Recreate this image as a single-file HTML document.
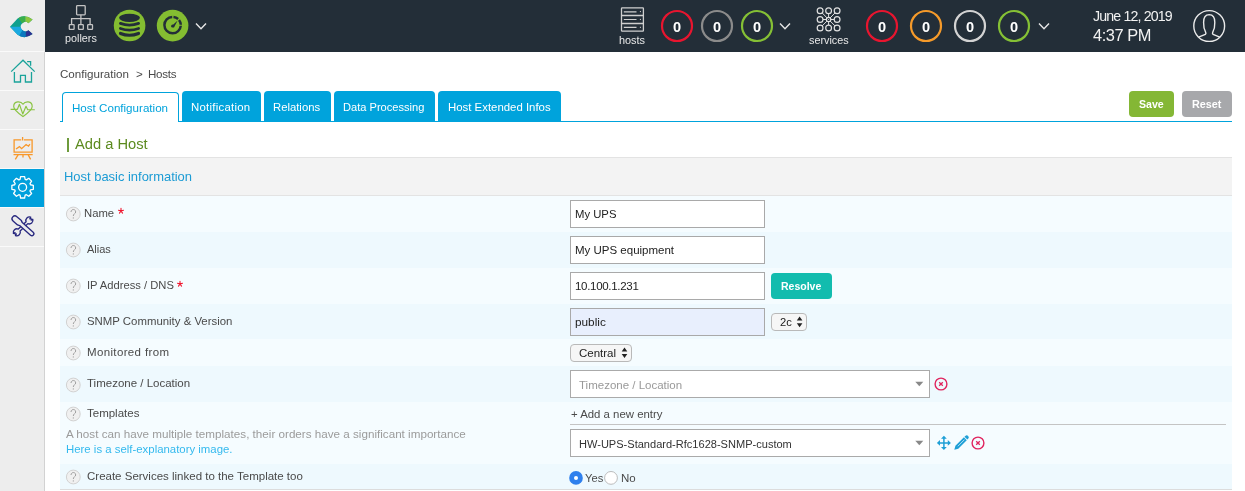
<!DOCTYPE html>
<html><head><meta charset="utf-8"><title>Centreon - Add a Host</title>
<style>
html,body{margin:0;padding:0;width:1245px;height:491px;overflow:hidden;background:#fff}
body{position:relative;font-family:"Liberation Sans", sans-serif}
span{font-family:"Liberation Sans", sans-serif;will-change:transform}
</style></head><body>
<div style="position:absolute;left:0px;top:0px;width:1245px;height:491px;background:#fff"></div>
<div style="position:absolute;left:0px;top:0px;width:45px;height:52px;background:#ededed"></div>
<div style="position:absolute;left:0px;top:52px;width:44px;height:439px;background:#ededed"></div>
<div style="position:absolute;left:44px;top:52px;width:1px;height:439px;background:#d2d2d2"></div>
<div style="position:absolute;left:45px;top:0px;width:1200px;height:52px;background:#232e38"></div>
<div style="position:absolute;left:0px;top:51px;width:44px;height:1px;background:#fafafa"></div>
<div style="position:absolute;left:0px;top:90px;width:44px;height:1px;background:#fafafa"></div>
<div style="position:absolute;left:0px;top:129px;width:44px;height:1px;background:#fafafa"></div>
<div style="position:absolute;left:0px;top:168px;width:44px;height:1px;background:#fafafa"></div>
<div style="position:absolute;left:0px;top:207px;width:44px;height:1px;background:#fafafa"></div>
<div style="position:absolute;left:0px;top:246px;width:44px;height:1px;background:#fafafa"></div>
<div style="position:absolute;left:0px;top:169px;width:44px;height:38px;background:#00a0dc"></div>
<svg style="position:absolute;left:0;top:0" width="44" height="52" viewBox="0 0 44 52">
<defs><clipPath id="lc"><path d="M10 26.7 L17.6 18.6 Q24.5 13.5 32.6 19.4 L28.4 23.2 A4.6 4.6 0 1 0 28.4 30.2 L32.6 34.0 Q24.5 39.9 17.6 34.8 Z"/></clipPath></defs>
<g clip-path="url(#lc)">
<rect x="0" y="0" width="44" height="52" fill="#0fa08e"/>
<polygon points="24.5,26.7 14,12 25.3,12 25.3,26.7" fill="#3aae4a"/>
<polygon points="25.3,26.7 25.3,10 40,10 40,26.7" fill="#8dc63f"/>
<polygon points="24.5,26.7 0,26.7 0,45 14,45" fill="#1ba9e1"/>
<polygon points="24.5,26.7 14,45 25.8,45 25.8,26.7" fill="#0b78c0"/>
<polygon points="25.8,26.7 25.8,45 40,45 40,26.7" fill="#2e3192"/>
</g></svg>
<svg style="position:absolute;left:60px;top:0" width="44" height="52" viewBox="60 0 44 52" fill="none" stroke="#c4c4c4" stroke-width="1.3">
<rect x="76.6" y="5.6" width="8.6" height="9.2" rx="0.8"/>
<path d="M80.9 14.8 V18.6 M71.6 24.4 V18.6 H90.1 V24.4 M80.9 18.6 V24.4"/>
<rect x="69.3" y="24.6" width="4.8" height="4.8" rx="0.6"/>
<rect x="78.5" y="24.6" width="4.8" height="4.8" rx="0.6"/>
<rect x="87.7" y="24.6" width="4.8" height="4.8" rx="0.6"/>
</svg>
<span style="position:absolute;left:65px;top:32.66px;font-size:10.8px;line-height:10.8px;color:#e8e8e8;font-weight:400;letter-spacing:0px;white-space:nowrap;">pollers</span>
<svg style="position:absolute;left:110px;top:6px" width="40" height="40" viewBox="110 6 40 40">
<circle cx="129.6" cy="25.5" r="15.8" fill="#84bd31"/>
<ellipse cx="129.5" cy="17.8" rx="10.45" ry="4.1" fill="#232e38"/>
<g stroke="#232e38" fill="none" stroke-linecap="round">
<path d="M120.4 23.4 Q129.5 26.8 138.6 23.4" stroke-width="2.8"/>
<path d="M120.4 28.45 Q129.5 31.65 138.6 28.45" stroke-width="2.8"/>
<path d="M120.5 33.4 Q129.5 37.1 138.5 33.4" stroke-width="3.2"/>
</g>
</svg>
<svg style="position:absolute;left:153px;top:6px" width="40" height="40" viewBox="153 6 40 40">
<circle cx="172.6" cy="25.6" r="15.8" fill="#84bd31"/>
<circle cx="172.6" cy="25.1" r="8.2" fill="none" stroke="#232e38" stroke-width="2.5" stroke-dasharray="37.3 1.3 5.1 1.3 5.2 1.3" stroke-dashoffset="-0.7"/>
<path d="M171.2 26.6 L177.6 20.6 L174 27.4 Z" fill="#232e38"/>
<circle cx="172.6" cy="26" r="1.5" fill="#232e38"/>
</svg>
<svg style="position:absolute;left:189.7px;top:18px" width="22" height="16" viewBox="189.7 18 22 16"><path d="M195.7 23.5 L200.7 28.8 L205.7 23.5" fill="none" stroke="#e6e6e6" stroke-width="1.4"/></svg>
<svg style="position:absolute;left:615px;top:0" width="36" height="36" viewBox="615 0 36 36" fill="none" stroke="#cfcfcf" stroke-width="1.3">
<rect x="621.5" y="7.8" width="21.9" height="23.4" rx="0.6"/>
<path d="M621.5 15.5 H643.4 M621.5 23.5 H643.4"/>
<path d="M623.8 11.8 H636.5 M623.8 19.5 H636.5 M623.8 27.4 H636.5" stroke-width="1.2"/>
<g stroke="none" fill="#d0d0d0"><rect x="639.9" y="11" width="1" height="1.1"/><rect x="639.9" y="18.9" width="1" height="1.1"/><rect x="639.9" y="26.8" width="1" height="1.1"/></g>
</svg>
<span style="position:absolute;left:619px;top:34.77px;font-size:10.9px;line-height:10.9px;color:#e8e8e8;font-weight:400;letter-spacing:0px;white-space:nowrap;">hosts</span>
<svg style="position:absolute;left:660px;top:9px" width="34" height="34" viewBox="660 9 34 34"><circle cx="677" cy="26" r="15" fill="none" stroke="#e8152f" stroke-width="2.2"/></svg>
<span style="position:absolute;left:672.8px;top:19.94px;font-size:14.6px;line-height:14.6px;color:#fff;font-weight:700;letter-spacing:0px;white-space:nowrap;">0</span>
<svg style="position:absolute;left:700px;top:9px" width="34" height="34" viewBox="700 9 34 34"><circle cx="717" cy="26" r="15" fill="none" stroke="#8b8b8b" stroke-width="2.2"/></svg>
<span style="position:absolute;left:712.8px;top:19.94px;font-size:14.6px;line-height:14.6px;color:#fff;font-weight:700;letter-spacing:0px;white-space:nowrap;">0</span>
<svg style="position:absolute;left:740px;top:9px" width="34" height="34" viewBox="740 9 34 34"><circle cx="757" cy="26" r="15" fill="none" stroke="#85c035" stroke-width="2.2"/></svg>
<span style="position:absolute;left:752.8px;top:19.94px;font-size:14.6px;line-height:14.6px;color:#fff;font-weight:700;letter-spacing:0px;white-space:nowrap;">0</span>
<svg style="position:absolute;left:773.5px;top:18px" width="22" height="16" viewBox="773.5 18 22 16"><path d="M779.5 23.5 L784.5 28.8 L789.5 23.5" fill="none" stroke="#e6e6e6" stroke-width="1.4"/></svg>
<svg style="position:absolute;left:812px;top:3px" width="34" height="34" viewBox="812 3 34 34" fill="none" stroke="#e0e0e0" stroke-width="1.2">
<circle cx="820.1" cy="10.8" r="2.9"/><circle cx="820.1" cy="19.5" r="2.9"/><circle cx="820.1" cy="28.0" r="2.9"/><circle cx="828.6" cy="10.8" r="2.9"/><circle cx="828.6" cy="28.0" r="2.9"/><circle cx="837.1" cy="10.8" r="2.9"/><circle cx="837.1" cy="19.5" r="2.9"/><circle cx="837.1" cy="28.0" r="2.9"/>
<circle cx="828.6" cy="19.5" r="2.2"/><circle cx="828.6" cy="19.5" r="0.6" fill="#e0e0e0" stroke="none"/>
<path d="M827.06 17.93 L822.13 12.87 M826.40 19.50 L823.00 19.50 M827.04 21.06 L822.15 25.95 M828.60 17.30 L828.60 13.70 M828.60 21.70 L828.60 25.10 M830.14 17.93 L835.07 12.87 M830.80 19.50 L834.20 19.50 M830.16 21.06 L835.05 25.95" stroke-width="1"/>
</svg>
<span style="position:absolute;left:809px;top:34.86px;font-size:10.8px;line-height:10.8px;color:#e8e8e8;font-weight:400;letter-spacing:0px;white-space:nowrap;">services</span>
<svg style="position:absolute;left:865px;top:9px" width="34" height="34" viewBox="865 9 34 34"><circle cx="882" cy="26" r="15" fill="none" stroke="#e8152f" stroke-width="2.2"/></svg>
<span style="position:absolute;left:877.8px;top:19.94px;font-size:14.6px;line-height:14.6px;color:#fff;font-weight:700;letter-spacing:0px;white-space:nowrap;">0</span>
<svg style="position:absolute;left:909px;top:9px" width="34" height="34" viewBox="909 9 34 34"><circle cx="926" cy="26" r="15" fill="none" stroke="#f59a2a" stroke-width="2.2"/></svg>
<span style="position:absolute;left:921.8px;top:19.94px;font-size:14.6px;line-height:14.6px;color:#fff;font-weight:700;letter-spacing:0px;white-space:nowrap;">0</span>
<svg style="position:absolute;left:953px;top:9px" width="34" height="34" viewBox="953 9 34 34"><circle cx="970" cy="26" r="15" fill="none" stroke="#d3d3d3" stroke-width="2.2"/></svg>
<span style="position:absolute;left:965.8px;top:19.94px;font-size:14.6px;line-height:14.6px;color:#fff;font-weight:700;letter-spacing:0px;white-space:nowrap;">0</span>
<svg style="position:absolute;left:997px;top:9px" width="34" height="34" viewBox="997 9 34 34"><circle cx="1014" cy="26" r="15" fill="none" stroke="#85c035" stroke-width="2.2"/></svg>
<span style="position:absolute;left:1009.8px;top:19.94px;font-size:14.6px;line-height:14.6px;color:#fff;font-weight:700;letter-spacing:0px;white-space:nowrap;">0</span>
<svg style="position:absolute;left:1032.5px;top:18px" width="22" height="16" viewBox="1032.5 18 22 16"><path d="M1038.5 23.5 L1043.5 28.8 L1048.5 23.5" fill="none" stroke="#e6e6e6" stroke-width="1.4"/></svg>
<span style="position:absolute;left:1092.5px;top:8.88px;font-size:14.2px;line-height:14.2px;color:#f2f2f2;font-weight:400;letter-spacing:-0.85px;white-space:nowrap;">June 12, 2019</span>
<span style="position:absolute;left:1093px;top:27.12px;font-size:16.4px;line-height:16.4px;color:#f2f2f2;font-weight:400;letter-spacing:-0.45px;white-space:nowrap;">4:37 PM</span>
<svg style="position:absolute;left:1190px;top:7px" width="38" height="38" viewBox="1190 7 38 38" fill="none" stroke="#eaeaea" stroke-width="1.4">
<circle cx="1209.2" cy="26" r="15.4"/>
<path d="M1198.6 37.2 L1205.3 34.5 Q1206.3 33.8 1205.7 32.4 Q1203.4 28.3 1203.6 22.5 Q1203.4 14.8 1209.2 14.6 Q1215 14.8 1214.8 22.5 Q1215 28.3 1212.7 32.4 Q1212.1 33.8 1213.1 34.5 L1219.8 37.2"/>
</svg>
<svg style="position:absolute;left:0;top:52px" width="44" height="195" viewBox="0 52 44 195">
<g fill="none" stroke="#1aa39a" stroke-width="1.3">
<path d="M11.2 71.6 L23 60.2 L34.7 71.6"/>
<path d="M14.4 72 V82 H20.5 V75.4 H25.4 V82 H31.5 V72"/>
<path d="M27.1 61.6 H30.6 V65.7"/>
</g>
<g fill="none" stroke="#8ac443" stroke-width="1.15" stroke-linejoin="round">
<path d="M10.6 109.3 H17.4 L19.4 104.3 L22.8 114 L26 106.3 L27.7 109.7 H34.8"/>
<path d="M23 104.3 C21 101 13.7 100.5 13.7 106.5 C13.7 110 18 113 23 116.6 C28 113 32.2 110 32.2 106.5 C32.2 100.5 25 101 23 104.3 Z"/>
</g>
<g fill="none" stroke="#f8982a" stroke-width="1.3">
<path d="M21.2 139.9 H14.1 V152.1 H32.1 V139.9 H24 M22.6 137 V140.5"/>
<path d="M13.5 154.6 H32.7"/>
<path d="M18.1 154.9 L15.3 159.4 M28.2 154.9 L30.6 159.4 M23 154.9 V157.4"/>
<path d="M16 149 L19.5 146.6 L21.6 148.7 L26.1 144.5 L28.5 146.2 L29.9 144.2"/>
</g>
</svg>
<svg style="position:absolute;left:0;top:168px" width="44" height="39" viewBox="0 168 44 39">
<g fill="none" stroke="#fff" stroke-width="1.3" stroke-linejoin="round">
<polygon points="20.04,179.41 20.61,176.58 24.59,176.58 25.16,179.41 26.37,179.90 28.77,178.32 31.58,181.13 30.00,183.53 30.49,184.74 33.32,185.31 33.32,189.29 30.49,189.86 30.00,191.07 31.58,193.47 28.77,196.28 26.37,194.70 25.16,195.19 24.59,198.02 20.61,198.02 20.04,195.19 18.83,194.70 16.43,196.28 13.62,193.47 15.20,191.07 14.71,189.86 11.88,189.29 11.88,185.31 14.71,184.74 15.20,183.53 13.62,181.13 16.43,178.32 18.83,179.90"/>
<circle cx="22.6" cy="187.3" r="4.0"/>
</g></svg>
<svg style="position:absolute;left:0;top:207px" width="44" height="39" viewBox="0 207 44 39">
<g fill="#ededed" stroke="#28287f" stroke-width="1.35" stroke-linejoin="round">
<path transform="translate(16.8 232.3) rotate(-43.4)" d="M3.3 -1.3 A3.6 3.6 0 0 0 -3.25 -1.5 L-1.5 -0.9 A0.9 0.9 0 0 0 -1.5 0.9 L-3.25 1.5 A3.6 3.6 0 0 0 3.3 1.3 L14.0 1.3 A3.6 3.6 0 0 0 20.55 1.5 L18.8 0.9 A0.9 0.9 0 0 0 18.8 -0.9 L20.55 -1.5 A3.6 3.6 0 0 0 14.0 -1.3 Z"/>
<path transform="translate(13.9 217.9) rotate(41.3)" d="M1.4 -2.9 H7.4 L9.4 -2.0 H23.9 A2.0 2.0 0 0 1 23.9 2.0 H9.4 L7.4 2.9 H1.4 A2.9 2.9 0 0 1 1.4 -2.9 Z"/>
</g></svg>
<span style="position:absolute;left:60.3px;top:67.98px;font-size:11.6px;line-height:11.6px;color:#4a4a4a;font-weight:400;letter-spacing:0px;white-space:nowrap;">Configuration</span>
<span style="position:absolute;left:135.5px;top:67.98px;font-size:11.6px;line-height:11.6px;color:#4a4a4a;font-weight:400;letter-spacing:0px;white-space:nowrap;">&gt;</span>
<span style="position:absolute;left:148px;top:67.98px;font-size:11.6px;line-height:11.6px;color:#4a4a4a;font-weight:400;letter-spacing:-0.25px;white-space:nowrap;">Hosts</span>
<div style="position:absolute;left:60px;top:121px;width:1172px;height:1px;background:#00a3dc"></div>
<div style="position:absolute;left:62px;top:92px;width:117px;height:30px;background:#fff;border:1px solid #00a3dc;border-bottom:none;border-radius:4px 4px 0 0;box-sizing:border-box"></div>
<span style="position:absolute;left:72px;top:101.58px;font-size:11.6px;line-height:11.6px;color:#00a3dc;font-weight:400;letter-spacing:0px;white-space:nowrap;">Host Configuration</span>
<div style="position:absolute;left:182px;top:91px;width:79px;height:30px;background:#00a3dc;border-radius:4px 4px 0 0"></div>
<span style="position:absolute;left:191.3px;top:101.95px;font-size:11.4px;line-height:11.4px;color:#fff;font-weight:400;letter-spacing:0.26px;white-space:nowrap;">Notification</span>
<div style="position:absolute;left:264px;top:91px;width:67px;height:30px;background:#00a3dc;border-radius:4px 4px 0 0"></div>
<span style="position:absolute;left:273.2px;top:102.03px;font-size:11.3px;line-height:11.3px;color:#fff;font-weight:400;letter-spacing:0px;white-space:nowrap;">Relations</span>
<div style="position:absolute;left:334px;top:91px;width:100.5px;height:30px;background:#00a3dc;border-radius:4px 4px 0 0"></div>
<span style="position:absolute;left:343.4px;top:102.20px;font-size:11.1px;line-height:11.1px;color:#fff;font-weight:400;letter-spacing:0px;white-space:nowrap;">Data Processing</span>
<div style="position:absolute;left:438px;top:91px;width:123px;height:30px;background:#00a3dc;border-radius:4px 4px 0 0"></div>
<span style="position:absolute;left:448px;top:101.95px;font-size:11.4px;line-height:11.4px;color:#fff;font-weight:400;letter-spacing:0px;white-space:nowrap;">Host Extended Infos</span>
<div style="position:absolute;left:1129px;top:91px;width:45px;height:26px;background:#84b735;border-radius:4px"></div>
<span style="position:absolute;left:1139px;top:98.93px;font-size:10.6px;line-height:10.6px;color:#fff;font-weight:700;letter-spacing:0px;white-space:nowrap;">Save</span>
<div style="position:absolute;left:1182px;top:91px;width:50px;height:26px;background:#a7a8ab;border-radius:4px"></div>
<span style="position:absolute;left:1192.3px;top:98.76px;font-size:10.8px;line-height:10.8px;color:#fff;font-weight:700;letter-spacing:0px;white-space:nowrap;">Reset</span>
<div style="position:absolute;left:67.2px;top:138px;width:1.4px;height:14px;background:#6e9b3c"></div>
<span style="position:absolute;left:75px;top:137.36px;font-size:14.7px;line-height:14.7px;color:#5b8a1e;font-weight:400;letter-spacing:0px;white-space:nowrap;">Add a Host</span>
<div style="position:absolute;left:60px;top:157px;width:1172px;height:39px;background:#f3f3f3;border-top:1px solid #e3e3e3;border-bottom:1px solid #e3e3e3;box-sizing:border-box"></div>
<span style="position:absolute;left:64.3px;top:170.64px;font-size:12.95px;line-height:12.95px;color:#1b9bd4;font-weight:400;letter-spacing:0px;white-space:nowrap;">Host basic information</span>
<div style="position:absolute;left:60px;top:196px;width:1172px;height:36px;background:#f5fcff"></div>
<div style="position:absolute;left:60px;top:232px;width:1172px;height:36px;background:#eef9fe"></div>
<div style="position:absolute;left:60px;top:268px;width:1172px;height:36px;background:#f5fcff"></div>
<div style="position:absolute;left:60px;top:304px;width:1172px;height:35px;background:#eef9fe"></div>
<div style="position:absolute;left:60px;top:339px;width:1172px;height:27px;background:#f5fcff"></div>
<div style="position:absolute;left:60px;top:366px;width:1172px;height:36px;background:#eef9fe"></div>
<div style="position:absolute;left:60px;top:402px;width:1172px;height:62px;background:#f5fcff"></div>
<div style="position:absolute;left:60px;top:464px;width:1172px;height:25px;background:#eef9fe"></div>
<div style="position:absolute;left:60px;top:489px;width:1172px;height:1px;background:#dcdcdc"></div>
<svg style="position:absolute;left:64px;top:205.4px" width="19" height="18" viewBox="64 205.4 19 18"><circle cx="73.3" cy="214.4" r="6.9" fill="#f0f0f0" stroke="#d2d2d2" stroke-width="1"/><path d="M71.0 212.4 C71.0 209.1 75.8 209.1 75.7 212.4 C75.6 214.1 73.3 214.1 73.3 216.4" fill="none" stroke="#9c9c9c" stroke-width="0.95"/><circle cx="73.3" cy="218.3" r="0.6" fill="#9c9c9c"/></svg>
<span style="position:absolute;left:84.3px;top:208.43px;font-size:11.3px;line-height:11.3px;color:#4a4a4a;font-weight:400;letter-spacing:0px;white-space:nowrap;">Name</span>
<svg style="position:absolute;left:116.4px;top:206.3px" width="10" height="10" viewBox="116.4 206.3 10 10"><path d="M121.4 211.3 L121.40 208.70 M121.4 211.3 L123.87 210.50 M121.4 211.3 L122.93 213.40 M121.4 211.3 L119.87 213.40 M121.4 211.3 L118.93 210.50" stroke="#f0142c" stroke-width="1.1" stroke-linecap="round"/></svg>
<svg style="position:absolute;left:64px;top:241.3px" width="19" height="18" viewBox="64 241.3 19 18"><circle cx="73.3" cy="250.3" r="6.9" fill="#f0f0f0" stroke="#d2d2d2" stroke-width="1"/><path d="M71.0 248.3 C71.0 245.0 75.8 245.0 75.7 248.3 C75.6 250.0 73.3 250.0 73.3 252.3" fill="none" stroke="#9c9c9c" stroke-width="0.95"/><circle cx="73.3" cy="254.20000000000002" r="0.6" fill="#9c9c9c"/></svg>
<span style="position:absolute;left:86.8px;top:244.39px;font-size:11.0px;line-height:11.0px;color:#4a4a4a;font-weight:400;letter-spacing:0px;white-space:nowrap;">Alias</span>
<svg style="position:absolute;left:64px;top:277.3px" width="19" height="18" viewBox="64 277.3 19 18"><circle cx="73.3" cy="286.3" r="6.9" fill="#f0f0f0" stroke="#d2d2d2" stroke-width="1"/><path d="M71.0 284.3 C71.0 281.0 75.8 281.0 75.7 284.3 C75.6 286.0 73.3 286.0 73.3 288.3" fill="none" stroke="#9c9c9c" stroke-width="0.95"/><circle cx="73.3" cy="290.2" r="0.6" fill="#9c9c9c"/></svg>
<span style="position:absolute;left:87px;top:279.92px;font-size:11.2px;line-height:11.2px;color:#4a4a4a;font-weight:400;letter-spacing:0px;white-space:nowrap;">IP Address / DNS</span>
<svg style="position:absolute;left:174.6px;top:279.2px" width="10" height="10" viewBox="174.6 279.2 10 10"><path d="M179.6 284.2 L179.60 281.60 M179.6 284.2 L182.07 283.40 M179.6 284.2 L181.13 286.30 M179.6 284.2 L178.07 286.30 M179.6 284.2 L177.13 283.40" stroke="#f0142c" stroke-width="1.1" stroke-linecap="round"/></svg>
<svg style="position:absolute;left:64px;top:313.4px" width="19" height="18" viewBox="64 313.4 19 18"><circle cx="73.3" cy="322.4" r="6.9" fill="#f0f0f0" stroke="#d2d2d2" stroke-width="1"/><path d="M71.0 320.4 C71.0 317.09999999999997 75.8 317.09999999999997 75.7 320.4 C75.6 322.09999999999997 73.3 322.09999999999997 73.3 324.4" fill="none" stroke="#9c9c9c" stroke-width="0.95"/><circle cx="73.3" cy="326.29999999999995" r="0.6" fill="#9c9c9c"/></svg>
<span style="position:absolute;left:87.1px;top:315.85px;font-size:11.4px;line-height:11.4px;color:#4a4a4a;font-weight:400;letter-spacing:0px;white-space:nowrap;">SNMP Community &amp; Version</span>
<svg style="position:absolute;left:64px;top:343.8px" width="19" height="18" viewBox="64 343.8 19 18"><circle cx="73.3" cy="352.8" r="6.9" fill="#f0f0f0" stroke="#d2d2d2" stroke-width="1"/><path d="M71.0 350.8 C71.0 347.5 75.8 347.5 75.7 350.8 C75.6 352.5 73.3 352.5 73.3 354.8" fill="none" stroke="#9c9c9c" stroke-width="0.95"/><circle cx="73.3" cy="356.7" r="0.6" fill="#9c9c9c"/></svg>
<span style="position:absolute;left:87.2px;top:346.67px;font-size:11.5px;line-height:11.5px;color:#4a4a4a;font-weight:400;letter-spacing:0.36px;white-space:nowrap;">Monitored from</span>
<svg style="position:absolute;left:64px;top:375.5px" width="19" height="18" viewBox="64 375.5 19 18"><circle cx="73.3" cy="384.5" r="6.9" fill="#f0f0f0" stroke="#d2d2d2" stroke-width="1"/><path d="M71.0 382.5 C71.0 379.2 75.8 379.2 75.7 382.5 C75.6 384.2 73.3 384.2 73.3 386.5" fill="none" stroke="#9c9c9c" stroke-width="0.95"/><circle cx="73.3" cy="388.4" r="0.6" fill="#9c9c9c"/></svg>
<span style="position:absolute;left:87.2px;top:377.77px;font-size:11.5px;line-height:11.5px;color:#4a4a4a;font-weight:400;letter-spacing:0px;white-space:nowrap;">Timezone / Location</span>
<svg style="position:absolute;left:64px;top:405.1px" width="19" height="18" viewBox="64 405.1 19 18"><circle cx="73.3" cy="414.1" r="6.9" fill="#f0f0f0" stroke="#d2d2d2" stroke-width="1"/><path d="M71.0 412.1 C71.0 408.8 75.8 408.8 75.7 412.1 C75.6 413.8 73.3 413.8 73.3 416.1" fill="none" stroke="#9c9c9c" stroke-width="0.95"/><circle cx="73.3" cy="418.0" r="0.6" fill="#9c9c9c"/></svg>
<span style="position:absolute;left:86.9px;top:408.27px;font-size:11.5px;line-height:11.5px;color:#4a4a4a;font-weight:400;letter-spacing:0px;white-space:nowrap;">Templates</span>
<span style="position:absolute;left:66.2px;top:428.13px;font-size:11.66px;line-height:11.66px;color:#9b9b9b;font-weight:400;letter-spacing:0px;white-space:nowrap;">A host can have multiple templates, their orders have a significant importance</span>
<span style="position:absolute;left:66.2px;top:444.15px;font-size:11.4px;line-height:11.4px;color:#33b9ee;font-weight:400;letter-spacing:0px;white-space:nowrap;">Here is a self-explanatory image.</span>
<svg style="position:absolute;left:64px;top:468px" width="19" height="18" viewBox="64 468 19 18"><circle cx="73.3" cy="477" r="6.9" fill="#f0f0f0" stroke="#d2d2d2" stroke-width="1"/><path d="M71.0 475.0 C71.0 471.7 75.8 471.7 75.7 475.0 C75.6 476.7 73.3 476.7 73.3 479.0" fill="none" stroke="#9c9c9c" stroke-width="0.95"/><circle cx="73.3" cy="480.9" r="0.6" fill="#9c9c9c"/></svg>
<span style="position:absolute;left:87.2px;top:470.77px;font-size:11.5px;line-height:11.5px;color:#4a4a4a;font-weight:400;letter-spacing:0px;white-space:nowrap;">Create Services linked to the Template too</span>
<div style="position:absolute;left:570px;top:200px;width:195px;height:28px;background:#fff;border:1px solid #a9a9a9;box-sizing:border-box"></div>
<span style="position:absolute;left:575.3px;top:209.03px;font-size:11.3px;line-height:11.3px;color:#222;font-weight:400;letter-spacing:0px;white-space:nowrap;">My UPS</span>
<div style="position:absolute;left:570px;top:236px;width:195px;height:28px;background:#fff;border:1px solid #a9a9a9;box-sizing:border-box"></div>
<span style="position:absolute;left:575.3px;top:245.07px;font-size:11.5px;line-height:11.5px;color:#222;font-weight:400;letter-spacing:0px;white-space:nowrap;">My UPS equipment</span>
<div style="position:absolute;left:570px;top:272px;width:195px;height:28px;background:#fff;border:1px solid #a9a9a9;box-sizing:border-box"></div>
<span style="position:absolute;left:575px;top:281.07px;font-size:11.5px;line-height:11.5px;color:#222;font-weight:400;letter-spacing:-0.3px;white-space:nowrap;">10.100.1.231</span>
<div style="position:absolute;left:771px;top:273px;width:61px;height:26px;background:#12bcae;border-radius:4px"></div>
<span style="position:absolute;left:781px;top:281.21px;font-size:10.5px;line-height:10.5px;color:#fff;font-weight:700;letter-spacing:0px;white-space:nowrap;">Resolve</span>
<div style="position:absolute;left:570px;top:308px;width:195px;height:28px;background:#e8effd;border:1px solid #a9a9a9;box-sizing:border-box"></div>
<span style="position:absolute;left:575.3px;top:317.21px;font-size:11.8px;line-height:11.8px;color:#222;font-weight:400;letter-spacing:0px;white-space:nowrap;">public</span>
<div style="position:absolute;left:771px;top:313px;width:36px;height:18px;background:#f6f6f6;border:1px solid #b9b9b9;border-radius:4px;box-sizing:border-box"></div>
<span style="position:absolute;left:780.3px;top:316.72px;font-size:11.2px;line-height:11.2px;color:#222;font-weight:400;letter-spacing:0px;white-space:nowrap;">2c</span>
<svg style="position:absolute;left:795px;top:314px" width="10" height="16" viewBox="795 314 10 16"><path d="M796.8 320.6 L799.6 316.6 L802.4 320.6 Z M796.8 323.3 L799.6 327.3 L802.4 323.3 Z" fill="#222"/></svg>
<div style="position:absolute;left:570px;top:344px;width:62px;height:18px;background:#f6f6f6;border:1px solid #b9b9b9;border-radius:4px;box-sizing:border-box"></div>
<span style="position:absolute;left:579px;top:347.67px;font-size:11.5px;line-height:11.5px;color:#222;font-weight:400;letter-spacing:0px;white-space:nowrap;">Central</span>
<svg style="position:absolute;left:620px;top:345px" width="10" height="16" viewBox="620 345 10 16"><path d="M621.7 351.4 L624.5 347.4 L627.3 351.4 Z M621.7 354.1 L624.5 358.1 L627.3 354.1 Z" fill="#222"/></svg>
<div style="position:absolute;left:570px;top:370px;width:360px;height:28px;background:#fff;border:1px solid #aaa;box-sizing:border-box"></div>
<span style="position:absolute;left:579.2px;top:380.17px;font-size:11.5px;line-height:11.5px;color:#999;font-weight:400;letter-spacing:0px;white-space:nowrap;">Timezone / Location</span>
<svg style="position:absolute;left:912px;top:379.3px" width="14" height="10" viewBox="912 379.3 14 10"><path d="M915.3 382.1 H923.3 L919.3 386.5 Z" fill="#888"/></svg>
<svg style="position:absolute;left:932.9px;top:376.2px" width="16" height="16" viewBox="932.9 376.2 16 16"><circle cx="940.9" cy="384.2" r="5.9" fill="none" stroke="#e0245e" stroke-width="1.4"/><path d="M939.1 382.4 L942.6999999999999 386.0 M942.6999999999999 382.4 L939.1 386.0" stroke="#e0245e" stroke-width="1.3"/></svg>
<span style="position:absolute;left:570.5px;top:408.75px;font-size:11.4px;line-height:11.4px;color:#4a4a4a;font-weight:400;letter-spacing:0px;white-space:nowrap;">+ Add a new entry</span>
<div style="position:absolute;left:570px;top:424px;width:656px;height:1px;background:#c4c4c4"></div>
<div style="position:absolute;left:570px;top:429px;width:360px;height:28px;background:#fff;border:1px solid #aaa;box-sizing:border-box"></div>
<span style="position:absolute;left:579.3px;top:439.25px;font-size:11.05px;line-height:11.05px;color:#333;font-weight:400;letter-spacing:0px;white-space:nowrap;">HW-UPS-Standard-Rfc1628-SNMP-custom</span>
<svg style="position:absolute;left:912px;top:438px" width="14" height="10" viewBox="912 438 14 10"><path d="M915.3 440.8 H923.3 L919.3 445.2 Z" fill="#888"/></svg>
<svg style="position:absolute;left:935px;top:434px" width="18" height="18" viewBox="935 434 18 18" fill="#1e9fd6">
<path d="M943.9 438 V448 M939 442.9 H948.8" stroke="#1e9fd6" stroke-width="1.5" fill="none"/>
<path d="M943.9 435.7 L941 438.8 H946.8 Z M943.9 450.1 L941 447 H946.8 Z M936.9 442.9 L940 440 V445.8 Z M950.9 442.9 L947.8 440 V445.8 Z"/>
</svg>
<svg style="position:absolute;left:952px;top:433px" width="19" height="19" viewBox="952 433 19 19">
<g transform="translate(954.3 449.8) rotate(-45)">
<path d="M0 0 L3.6 -2 H15.6 V2 H3.6 Z" fill="#1e9fd6"/>
<path d="M16.4 -2 H17.6 A2 2 0 0 1 17.6 2 H16.4 Z" fill="#1e9fd6"/>
<path d="M5 0 H14.4" stroke="#dff3fb" stroke-width="0.7"/>
</g>
</svg>
<svg style="position:absolute;left:970.1px;top:435.1px" width="16" height="16" viewBox="970.1 435.1 16 16"><circle cx="978.1" cy="443.1" r="5.9" fill="none" stroke="#e0245e" stroke-width="1.4"/><path d="M976.3000000000001 441.3 L979.9 444.90000000000003 M979.9 441.3 L976.3000000000001 444.90000000000003" stroke="#e0245e" stroke-width="1.3"/></svg>
<svg style="position:absolute;left:566px;top:468px" width="56" height="20" viewBox="566 468 56 20">
<circle cx="576" cy="477.9" r="6.8" fill="#2f80ed"/><circle cx="576" cy="477.9" r="2" fill="#fff"/>
<circle cx="611" cy="477.9" r="6.4" fill="#fff" stroke="#b4b4b4" stroke-width="0.9"/>
</svg>
<span style="position:absolute;left:584.5px;top:472.92px;font-size:11.2px;line-height:11.2px;color:#4a4a4a;font-weight:400;letter-spacing:0px;white-space:nowrap;">Yes</span>
<span style="position:absolute;left:620.8px;top:472.67px;font-size:11.5px;line-height:11.5px;color:#4a4a4a;font-weight:400;letter-spacing:0px;white-space:nowrap;">No</span>
</body></html>
